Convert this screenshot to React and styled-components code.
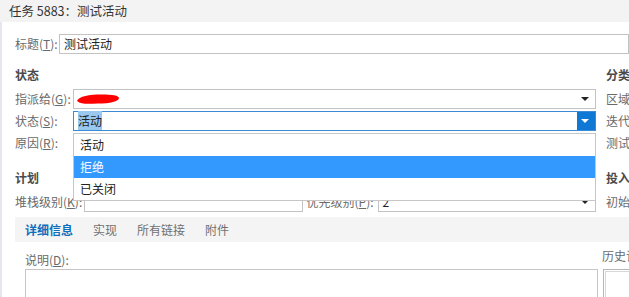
import React from "react";
import styled, { createGlobalStyle, css } from "styled-components";

const GlobalStyle = createGlobalStyle`
  html, body {
    margin: 0;
    padding: 0;
    background: #ffffff;
  }
  body {
    font-family: "Noto Sans CJK SC", "Noto Sans", "Liberation Sans", sans-serif;
    font-size: 12px;
    color: #222;
  }
`;

const App = () => {
  return (
    <>
      <GlobalStyle />
      <Window>
        <TitleBar>任务 5883：测试活动</TitleBar>
        <Body>
          <TitleRow>
            <Label width={44}>
              标题(<u>T</u>):
            </Label>
            <TextBox>测试活动</TextBox>
          </TitleRow>

          <Columns>
            <LeftCol>
              <SectionHead>状态</SectionHead>
              <FieldRow>
                <Label width={58}>
                  指派给(<u>G</u>):
                </Label>
                <Select>
                  <Redacted viewBox="0 0 44 12" width="44" height="12">
                    <path d="M1 8 C3 3 13 1.5 26 1.5 C36 1.5 43 2.5 43 5 C43 8.5 34 10.5 22 10.5 C12 11 5 11.5 1 8 Z" fill="#ff0000" />
                  </Redacted>
                </Select>
              </FieldRow>
              <FieldRow>
                <Label width={58}>
                  状态(<u>S</u>):
                </Label>
                <Select active>
                  <Selected>活动</Selected>
                  <DropList>
                    <DropItem>活动</DropItem>
                    <DropItem hot>拒绝</DropItem>
                    <DropItem>已关闭</DropItem>
                  </DropList>
                </Select>
              </FieldRow>
              <FieldRow>
                <Label width={58}>
                  原因(<u>R</u>):
                </Label>
                <Select />
              </FieldRow>

              <SectionHead gap>计划</SectionHead>
              <FieldRow>
                <Label width={69}>
                  堆栈级别(<u>K</u>):
                </Label>
                <TextBox />
                <Label width={71} indent={4}>
                  优先级别(<u>P</u>):
                </Label>
                <Select>2</Select>
              </FieldRow>
            </LeftCol>

            <RightCol>
              <SectionHead>分类</SectionHead>
              <SideRow>区域(A):</SideRow>
              <SideRow>迭代(I):</SideRow>
              <SideRow>测试</SideRow>
              <SectionHead gap>投入</SectionHead>
              <SideRow>初始估计:</SideRow>
            </RightCol>
          </Columns>

          <TabBar>
            <Tab current>详细信息</Tab>
            <Tab>实现</Tab>
            <Tab>所有链接</Tab>
            <Tab>附件</Tab>
          </TabBar>

          <Lower>
            <DescCol>
              <SmallLabel>
                说明(<u>D</u>):
              </SmallLabel>
              <TextArea />
            </DescCol>
            <HistoryCol>
              <HistoryLabel>历史记录</HistoryLabel>
              <HistoryBox />
            </HistoryCol>
          </Lower>
        </Body>
      </Window>
    </>
  );
};

/* Styled Components */
const Window = styled.div`
  width: 629px;
  height: 297px;
  overflow: hidden;
  background: #fff;
`;

const TitleBar = styled.div`
  height: 22px;
  line-height: 21px;
  padding-left: 9px;
  background: #f3f3f3;
  color: #333;
  font-size: 12.5px;
  white-space: nowrap;
`;

const Body = styled.div`
  border-left: 2px solid #e6e6ee;
  padding: 12px 0 0 13px;
  height: 275px;
  box-sizing: border-box;
`;

const TitleRow = styled.div`
  display: flex;
  align-items: center;
  height: 20px;
`;

const Label = styled.span`
  flex: none;
  width: ${({ width }) => width}px;
  padding-left: ${({ indent }) => indent || 0}px;
  color: #6a6a6a;
  line-height: 20px;
  white-space: nowrap;
  overflow: hidden;

  u {
    text-decoration-thickness: 1px;
    text-underline-offset: 1px;
  }
`;

const fieldBox = css`
  position: relative;
  box-sizing: border-box;
  height: 20px;
  line-height: 18px;
  padding-left: 4px;
  border: 1px solid #c3c3c3;
  background: #fff;
  color: #222;
  white-space: nowrap;
`;

const TextBox = styled.div`
  ${fieldBox}
  flex: 1;
`;

const Select = styled.div`
  ${fieldBox}
  flex: 1;
  border-color: ${({ active }) => (active ? "#3d8ad6" : "#c3c3c3")};

  &::after {
    content: "";
    position: absolute;
    top: 0;
    right: 0;
    width: 18px;
    height: 18px;
    background: ${({ active }) => (active ? "#0f78d4" : "transparent")};
  }

  &::before {
    content: "";
    position: absolute;
    z-index: 1;
    top: 7px;
    right: 6px;
    border-left: 4px solid transparent;
    border-right: 4px solid transparent;
    border-top: 4px solid ${({ active }) => (active ? "#ffffff" : "#222")};
  }
`;

const Redacted = styled.svg`
  display: block;
  margin-top: 3px;
  margin-left: -2px;
`;

const Selected = styled.span`
  background: #99c9ef;
  padding: 1px 0;
`;

const DropList = styled.div`
  position: absolute;
  z-index: 5;
  top: 21px;
  left: -1px;
  width: calc(100% + 2px);
  box-sizing: border-box;
  border: 1px solid #c6c6c6;
  background: #fff;
`;

const DropItem = styled.div`
  height: 22px;
  line-height: 22px;
  padding-left: 6px;
  background: ${({ hot }) => (hot ? "#3399ff" : "#fff")};
  color: ${({ hot }) => (hot ? "#fff" : "#222")};
`;

const Columns = styled.div`
  display: grid;
  grid-template-columns: 581px 40px;
  column-gap: 10px;
  margin-top: 13px;
`;

const LeftCol = styled.div`
  display: flex;
  flex-direction: column;
  gap: 2px;
`;

const RightCol = styled.div`
  display: flex;
  flex-direction: column;
  gap: 2px;
  overflow: hidden;
`;

const SectionHead = styled.div`
  height: 16px;
  line-height: 16px;
  font-weight: bold;
  color: #4a4a4a;
  margin-top: ${({ gap }) => (gap ? "15px" : "0")};
  margin-bottom: 4px;
  white-space: nowrap;
`;

const FieldRow = styled.div`
  display: flex;
  align-items: center;
  height: 20px;
`;

const SideRow = styled.div`
  height: 20px;
  line-height: 20px;
  color: #6a6a6a;
  white-space: nowrap;
`;

const TabBar = styled.div`
  display: flex;
  gap: 20px;
  height: 25px;
  margin-top: 5px;
  padding-left: 10px;
  background: #f4f4f4;
`;

const Tab = styled.div`
  line-height: 25px;
  font-weight: ${({ current }) => (current ? "bold" : "normal")};
  color: ${({ current }) => (current ? "#106ebe" : "#707070")};
  white-space: nowrap;
`;

const Lower = styled.div`
  display: grid;
  grid-template-columns: 573px 40px;
  column-gap: 4px;
  padding-left: 10px;
`;

const DescCol = styled.div`
  display: flex;
  flex-direction: column;
`;

const SmallLabel = styled.div`
  margin-top: 10px;
  height: 17px;
  line-height: 16px;
  color: #6a6a6a;
  white-space: nowrap;
`;

const TextArea = styled.div`
  height: 40px;
  border: 1px solid #c6c6c6;
`;

const HistoryCol = styled.div`
  display: flex;
  flex-direction: column;
  overflow: hidden;
`;

const HistoryLabel = styled.div`
  margin-top: 6px;
  height: 21px;
  line-height: 16px;
  color: #6a6a6a;
  white-space: nowrap;
`;

const HistoryBox = styled.div`
  margin-left: 1px;
  height: 40px;
  border: 1px solid #b5b5b5;
  box-shadow: inset 0 0 0 1px #fff, inset 0 0 0 2px #d8d8d8;
`;

export default App;
